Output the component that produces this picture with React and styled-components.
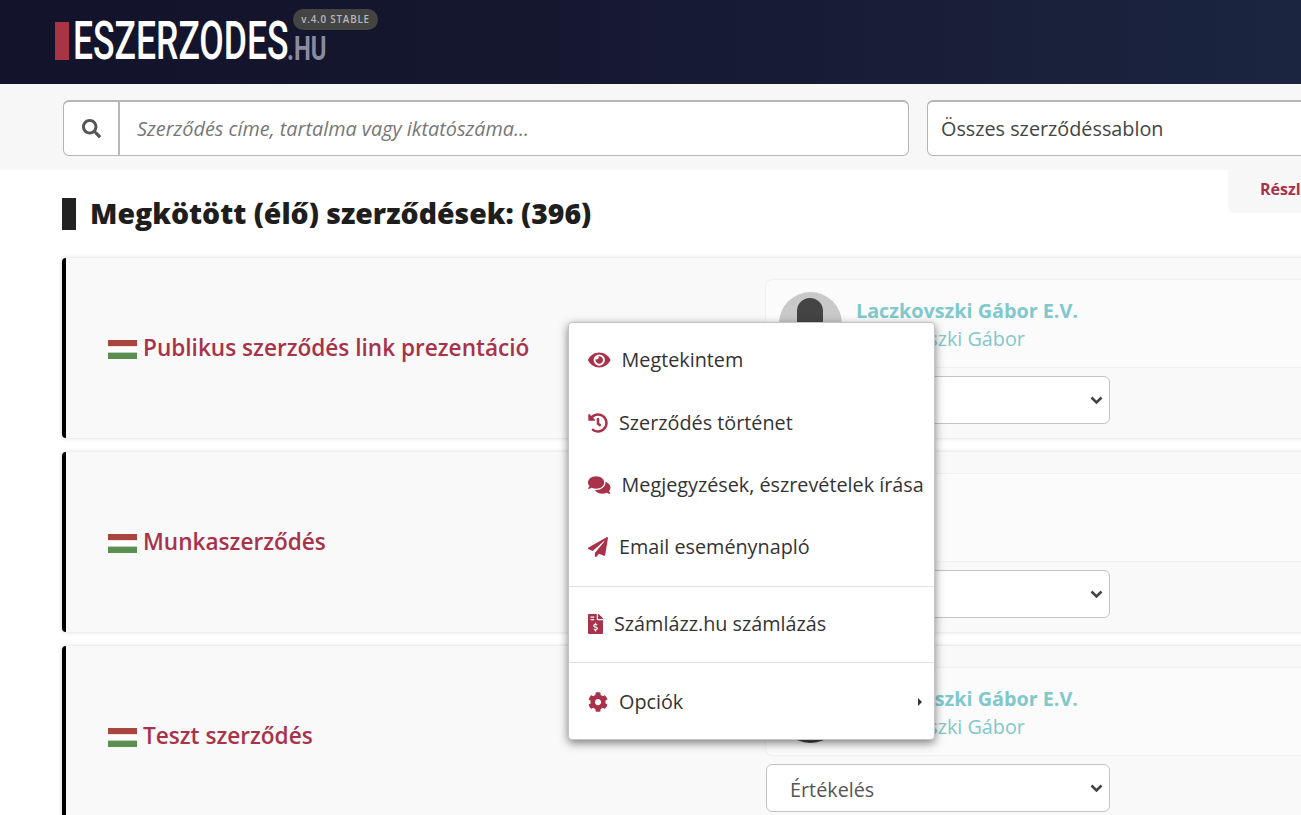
import React from "react";
import styled, { createGlobalStyle } from "styled-components";
import { FaEye, FaHistory, FaComments, FaPaperPlane, FaFileInvoiceDollar, FaCog, FaSearch } from "react-icons/fa";

const Global = createGlobalStyle`
  html, body { margin: 0; padding: 0; background: #fff; overflow: hidden; }
  body { font-family: "Open Sans", "Liberation Sans", sans-serif; color: #333; }
  * { box-sizing: border-box; }
`;

const Page = styled.div`
  position: relative;
  width: 1301px;
  height: 815px;
  overflow: hidden;
`;

const Header = styled.header`
  height: 84px;
  padding-left: 55px;
  background: linear-gradient(90deg, #13132b 0%, #15172f 40%, #1b2540 100%);
`;

const Logo = styled.div`
  position: relative;
  display: flex;
  align-items: flex-start;
  width: 340px;
  padding-top: 22px;
`;

const LogoBar = styled.span`
  width: 14px;
  height: 38px;
  background: #a83444;
`;

const LogoText = styled.span`
  display: inline-block;
  margin-left: 4px;
  width: 214px;
  height: 38px;
  line-height: 38px;
  font-family: "Roboto", "Liberation Sans", sans-serif;
  font-size: 53px;
  font-weight: 500;
  color: #fff;
  white-space: nowrap;
  transform: scaleX(0.67);
  transform-origin: left center;
`;

const LogoSuffix = styled.span`
  display: inline-block;
  width: 40px;
  height: 24px;
  margin-top: 14px;
  line-height: 24px;
  font-family: "Roboto", "Liberation Sans", sans-serif;
  font-size: 34px;
  font-weight: 700;
  color: #8b8b9f;
  white-space: nowrap;
  transform: scaleX(0.7);
  transform-origin: left center;
`;

const Badge = styled.span`
  position: absolute;
  left: 238px;
  top: 9px;
  height: 21px;
  width: 85px;
  border-radius: 11px;
  background: #444;
  color: #b9b9b9;
  font-size: 9.8px;
  font-weight: 600;
  letter-spacing: 0.8px;
  line-height: 21px;
  text-align: center;
  white-space: nowrap;
`;

const SearchBar = styled.div`
  height: 86px;
  background: #f7f7f7;
  padding: 16px 0 0 63px;
  display: flex;
  gap: 18px;
`;

const InputGroup = styled.div`
  display: flex;
  flex: none;
  width: 846px;
  height: 56px;
  background: #fff;
  border: 1px solid #b5b5b5;
  border-top-width: 2px;
  border-radius: 6px;
`;

const SearchIcon = styled.div`
  width: 56px;
  flex: none;
  display: flex;
  align-items: center;
  justify-content: center;
  border-right: 2px solid #b8b8b8;
  color: #555;
  font-size: 19px;
`;

const Placeholder = styled.div`
  flex: 1;
  padding-left: 17px;
  line-height: 53px;
  font-size: 19.85px;
  font-style: italic;
  color: #777;
`;

const TemplateSelect = styled.div`
  flex: none;
  width: 500px;
  height: 56px;
  padding-left: 13px;
  background: #fff;
  border: 1px solid #b5b5b5;
  border-top-width: 2px;
  border-radius: 6px;
  font-size: 19.8px;
  line-height: 53px;
  color: #444;
`;

const Tab = styled.div`
  position: absolute;
  left: 1228px;
  top: 170px;
  width: 73px;
  height: 43px;
  padding: 8px 0 0 32px;
  background: #f7f7f7;
  border-bottom-left-radius: 6px;
  color: #a8324a;
  font-size: 16px;
  font-weight: 700;
  white-space: nowrap;
  overflow: hidden;
`;

const Section = styled.main`
  padding: 28px 0 0 62px;
`;

const Heading = styled.h1`
  display: flex;
  align-items: center;
  height: 32px;
  padding-bottom: 2px;
  margin: 0 0 28px;
  font-size: 28.4px;
  line-height: 30px;
  font-weight: 800;
  color: #1e1e1e;
  white-space: nowrap;
  &::before {
    content: "";
    align-self: flex-start;
    width: 14px;
    height: 32px;
    margin-right: 14px;
    background: #222;
  }
`;

const Card = styled.article`
  display: flex;
  width: 1300px;
  height: 180px;
  margin-bottom: 14px;
  background: #f9f9f9;
  border-left: 4px solid #000;
  border-radius: 4px 0 0 4px;
  box-shadow: 0 0 4px rgba(0, 0, 0, 0.17);
`;

const TitleCell = styled.div`
  width: 700px;
  flex: none;
  padding: 0 0 1px 42px;
  display: flex;
  align-items: center;
  gap: 6px;
`;

const Flag = styled.svg`
  width: 29px;
  height: 19px;
  flex: none;
  margin-top: 3px;
`;

const Title = styled.h2`
  margin: 0;
  font-size: 22.6px;
  font-weight: 600;
  color: #a8324a;
  white-space: nowrap;
`;

const SideCell = styled.div`
  padding-top: 22px;
  display: flex;
  flex-direction: column;
  gap: 9px;
`;

const UserBox = styled.div`
  width: 560px;
  height: 87px;
  padding: 12px 0 0 13px;
  display: flex;
  gap: 14px;
  background: #fbfbfb;
  border-radius: 6px;
  box-shadow: 0 0 2px rgba(0, 0, 0, 0.12);
`;

const Avatar = styled.svg`
  width: 63px;
  height: 63px;
  flex: none;
`;

const UserText = styled.div`
  font-size: 19.8px;
  line-height: 28px;
  color: #7fc8cc;
  white-space: nowrap;
  padding-top: 5px;
`;

const UserName = styled.div`
  font-weight: 700;
`;

const RatingSelect = styled.div`
  width: 344px;
  height: 48px;
  padding: 2px 6px 0 23px;
  display: flex;
  align-items: center;
  justify-content: space-between;
  background: #fff;
  border: 1px solid #c4c4c4;
  border-radius: 6px;
  font-size: 19.8px;
  color: #555;
`;

const Chevron = styled.svg`
  width: 13px;
  height: 9px;
  margin-top: -2px;
`;

const Menu = styled.nav`
  position: absolute;
  left: 568px;
  top: 322px;
  width: 367px;
  height: 418px;
  padding-top: 7px;
  background: #fff;
  border: 1px solid #c4c4c4;
  border-radius: 4px;
  box-shadow: 0 3px 10px rgba(0, 0, 0, 0.5);
`;

const MenuItem = styled.div`
  position: relative;
  display: flex;
  align-items: center;
  height: 62px;
  padding: 0 0 2px 19px;
  gap: 11px;
  font-size: 19.8px;
  color: #333;
  white-space: nowrap;
  &:first-child {
    padding-bottom: 4px;
  }
  & > svg {
    flex: none;
    width: ${(p) => p.$icon}px;
    height: 20px;
    margin-top: 2px;
    color: #a8324a;
  }
`;

const Divider = styled.hr`
  margin: ${(p) => p.$top}px 0 ${(p) => p.$bottom}px;
  height: 1px;
  border: 0;
  background: #e2e2e2;
`;

const Caret = styled.span`
  position: absolute;
  right: 12px;
  top: 27px;
  border-left: 4px solid #333;
  border-top: 4px solid transparent;
  border-bottom: 4px solid transparent;
`;

const HuFlag = () => (
  <Flag viewBox="0 0 29 19">
    <rect width="29" height="6.4" fill="#a9443f" />
    <rect y="6.4" width="29" height="6.2" fill="#fff" />
    <rect y="12.6" width="29" height="6.4" fill="#5a8f4f" />
  </Flag>
);

const UserAvatar = ({ id }) => (
  <Avatar viewBox="0 0 63 63">
    <defs>
      <clipPath id={id}>
        <circle cx="31.5" cy="31.5" r="31.5" />
      </clipPath>
    </defs>
    <circle cx="31.5" cy="31.5" r="31.5" fill="#c9c9c9" />
    <g clipPath={`url(#${id})`} fill="#444">
      <ellipse cx="31" cy="19" rx="13" ry="13" />
      <rect x="18" y="18" width="26" height="22" />
      <path d="M4 63 C6 47 22 44 26 38 H38 C42 44 58 47 60 63 Z" />
    </g>
  </Avatar>
);

const contracts = [
  { title: "Publikus szerződés link prezentáció", user: true },
  { title: "Munkaszerződés", user: false },
  { title: "Teszt szerződés", user: true },
];

export default function App() {
  return (
    <Page>
      <Global />
      <Header>
        <Logo>
          <LogoBar />
          <LogoText>ESZERZODES</LogoText>
          <LogoSuffix>.HU</LogoSuffix>
          <Badge>v.4.0 STABLE</Badge>
        </Logo>
      </Header>
      <SearchBar>
        <InputGroup>
          <SearchIcon>
            <FaSearch />
          </SearchIcon>
          <Placeholder>Szerződés címe, tartalma vagy iktatószáma...</Placeholder>
        </InputGroup>
        <TemplateSelect>Összes szerződéssablon</TemplateSelect>
      </SearchBar>
      <Tab>Részl</Tab>
      <Section>
        <Heading>Megkötött (élő) szerződések: (396)</Heading>
        {contracts.map((c, i) => (
          <Card key={c.title}>
            <TitleCell>
              <HuFlag />
              <Title>{c.title}</Title>
            </TitleCell>
            <SideCell>
              <UserBox>
                {c.user && <UserAvatar id={`avatar-${i}`} />}
                {c.user && (
                  <UserText>
                    <UserName>Laczkovszki Gábor E.V.</UserName>
                    <div>Laczkovszki Gábor</div>
                  </UserText>
                )}
              </UserBox>
              <RatingSelect>
                Értékelés
                <Chevron viewBox="0 0 13 9">
                  <path d="M1.5 1.5 L6.5 6.5 L11.5 1.5" fill="none" stroke="#444" strokeWidth="2.6" />
                </Chevron>
              </RatingSelect>
            </SideCell>
          </Card>
        ))}
      </Section>
      <Menu>
        <MenuItem $icon={22.5}><FaEye />Megtekintem</MenuItem>
        <MenuItem $icon={20}><FaHistory />Szerződés történet</MenuItem>
        <MenuItem $icon={22.5}><FaComments />Megjegyzések, észrevételek írása</MenuItem>
        <MenuItem $icon={20}><FaPaperPlane />Email eseménynapló</MenuItem>
        <Divider $top={8} $bottom={6} />
        <MenuItem $icon={15}><FaFileInvoiceDollar />Számlázz.hu számlázás</MenuItem>
        <Divider $top={7} $bottom={8} />
        <MenuItem $icon={20}><FaCog />Opciók<Caret /></MenuItem>
      </Menu>
    </Page>
  );
}
